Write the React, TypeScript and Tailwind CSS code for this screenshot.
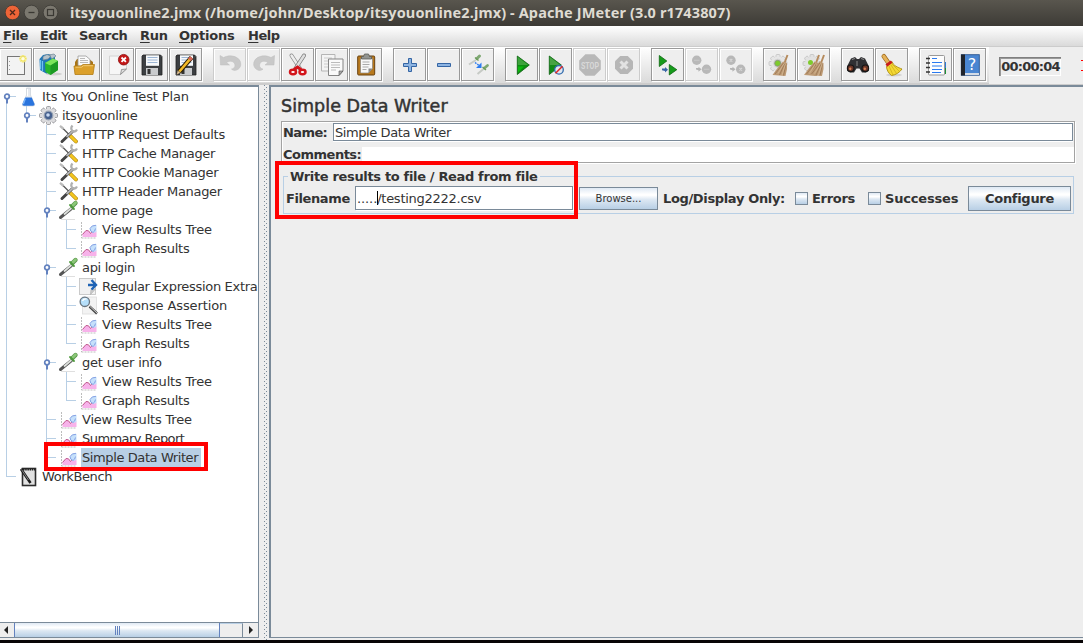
import React from "react";

type IconName =
  | "new" | "templates" | "open" | "close" | "save" | "saveAs" | "undo" | "redo"
  | "cut" | "copy" | "paste" | "plus" | "minus" | "toggle" | "play" | "playNow"
  | "stop" | "shutdown" | "remoteStart" | "remoteStop" | "remoteShutdown"
  | "clear" | "clearAll" | "search" | "resetSearch" | "list" | "help";

const GearPath = ({ cx, cy, r, fill, stroke }: { cx: number; cy: number; r: number; fill: string; stroke: string }) => (
  <g>
    {[0, 45, 90, 135].map((a) => (
      <rect key={a} x={cx - 2} y={cy - r} width={4} height={r * 2} rx={1} fill={fill} stroke={stroke} strokeWidth={0.8} transform={`rotate(${a} ${cx} ${cy})`} />
    ))}
    <circle cx={cx} cy={cy} r={r - 2} fill={fill} />
  </g>
);

const Floppy = () => (
  <g>
    <path d="M8 7h17.500l1.500 1.500V27H7V8z" fill="#3c3f42" stroke="#222" strokeWidth={0.8} />
    <rect x={11} y={7.300} width={13} height={10.500} fill="#f7f9fb" />
    <path d="M12.500 9.500h10M12.500 12h10M12.500 14.500h10" stroke="#9db6d4" strokeWidth={1} />
    <rect x={11} y={20} width={12} height={7} fill="#c9cbcd" />
    <rect x={12.500} y={21} width={3} height={5} fill="#333" />
  </g>
);

const Broom = ({ dx = 0 }: { dx?: number }) => (
  <g transform={`translate(${dx} 0)`}>
    <path d="M24.500 7L21.500 15" stroke="#b58a5c" strokeWidth={2} />
    <path d="M20 13.500l4 1.500 0 6-1.500 7-13-1 5-7z" fill="#bd9a74" />
    <path d="M20.500 15L12 26M21.500 16l-5 11M23 16l-2.500 11.500" stroke="#93704e" strokeWidth={0.7} />
    <path d="M21 15.500l-6 10M22.500 16l-3.500 11" stroke="#dcc2a0" strokeWidth={0.6} />
  </g>
);

const octagon = (cx: number, cy: number, r: number) => {
  const k = r * 0.42;
  return `${cx - k},${cy - r} ${cx + k},${cy - r} ${cx + r},${cy - k} ${cx + r},${cy + k} ${cx + k},${cy + r} ${cx - k},${cy + r} ${cx - r},${cy + k} ${cx - r},${cy - k}`;
};

const icons: Record<IconName, React.ReactNode> = {
  new: (
    <g>
      <rect x={8.500} y={8.500} width={17} height={18} fill="#f3f3f3" stroke="#767676" />
      <path d="M10.500 13v1M10.500 17v1M10.500 21v1" stroke="#999" />
      <circle cx={24} cy={10.700} r={3.800} fill="#f6ee9a" opacity={0.800} />
      <path d="M24 7v7.500M20.500 10.700h7M21.500 8.300l5 5M26.500 8.300l-5 5" stroke="#f2e45c" strokeWidth={1.200} />
      <circle cx={24} cy={10.700} r={1.800} fill="#fffde0" />
    </g>
  ),
  templates: (
    <g>
      <path d="M6.500 11L10 7l5-1 7 2v14l-8 4-7-4z" fill="#1f77b8" />
      <path d="M10 8.500l4-2 4 1.500-3 3-5 1zM16 7l5-1 2 2-4 3z" fill="#b7c3cc" stroke="#6f8796" strokeWidth={0.700} />
      <path d="M7.500 12v9.500M9.500 13v10" stroke="#6fc3ee" strokeWidth={1.200} />
      <ellipse cx={21} cy={26} rx={8} ry={1.500} fill="#cfcfcf" />
      <path d="M12 15l8-4.500 5 2.500V22l-7.500 5-5-3z" fill="#27b62c" />
      <path d="M12 15l8-4.500 5 2.500-7.500 4.500z" fill="#7be55c" />
      <path d="M17.500 17.500V27l7.500-5v-9z" fill="#1c9a24" />
    </g>
  ),
  open: (
    <g>
      <path d="M8 14l2-3h12l4 3v10H8z" fill="#a87416" />
      <path d="M11 18V8h8l4 3.500V18z" fill="#fafafa" stroke="#999" strokeWidth={0.800} />
      <path d="M13 10.500h5M13 12.500h8M13 14.500h8" stroke="#aaa" strokeWidth={0.800} />
      <path d="M7 18h7l2-1.500h11.500L26 26.500H8z" fill="#dba02b" stroke="#b27c14" strokeWidth={0.800} />
      <path d="M8.500 19.200h6l2-1.500h9.500" stroke="#f6d384" fill="none" strokeWidth={0.800} />
    </g>
  ),
  close: (
    <g>
      <path d="M8.500 8h17v13l-6 5.500h-11z" fill="#f6f6f6" stroke="#cfcfcf" strokeWidth={0.900} />
      <path d="M25.500 21l-6 5.500 1-5z" fill="#ddd" stroke="#777" strokeWidth={0.700} />
      <circle cx={22.700} cy={11.700} r={5.300} fill="#c41717" stroke="#8c1010" strokeWidth={0.800} />
      <path d="M20.500 9.500l4.400 4.400M24.900 9.500l-4.400 4.400" stroke="#fff" strokeWidth={1.800} />
    </g>
  ),
  save: <Floppy />,
  saveAs: (
    <g>
      <Floppy />
      <path d="M22.500 9.500L10 24" stroke="#2b1c00" strokeWidth={4.600} />
      <path d="M22.300 9.700L10 24" stroke="#f3ba27" strokeWidth={2.600} />
      <path d="M22.500 9.500l-2 2.300" stroke="#d9655a" strokeWidth={3.600} />
      <path d="M8.500 22.200l3 2.600-4 2.200z" fill="#e8c897" stroke="#333" strokeWidth={0.500} />
    </g>
  ),
  undo: <path d="M7 7.500l.5 9.500h9l-3-2.500c4-2.500 8-1 8.500 2.500 .2 2.500-2 4-3.500 4 2.500 3 8.500 1 9.300-4C28.500 9 18 5.500 10.500 9.500z" fill="#c9c9c9" stroke="#bcbcbc" strokeWidth={0.500} />,
  redo: <path transform="translate(34.500 0) scale(-1 1)" d="M7 7.500l.5 9.500h9l-3-2.500c4-2.500 8-1 8.500 2.500 .2 2.500-2 4-3.500 4 2.500 3 8.500 1 9.300-4C28.500 9 18 5.500 10.500 9.500z" fill="#c9c9c9" stroke="#bcbcbc" strokeWidth={0.500} />,
  cut: (
    <g>
      <path d="M10.500 7.500l8.500 13" stroke="#888" strokeWidth={4} strokeLinecap="round" />
      <path d="M10.500 7.500l8.500 13" stroke="#eee" strokeWidth={2.500} strokeLinecap="round" />
      <path d="M23 7.500l-8.500 13" stroke="#777" strokeWidth={4} strokeLinecap="round" />
      <path d="M23 7.500l-8.500 13" stroke="#dedede" strokeWidth={2.500} strokeLinecap="round" />
      <path d="M13 21.500l3.500-2.500 3.500 2.500" stroke="#d3141b" strokeWidth={3} fill="none" />
      <ellipse cx={12} cy={24} rx={3} ry={2.200} fill="#fff" stroke="#d3141b" strokeWidth={2.500} />
      <ellipse cx={21.500} cy={24} rx={3} ry={2.200} fill="#fff" stroke="#d3141b" strokeWidth={2.500} />
    </g>
  ),
  copy: (
    <g>
      <path d="M6.500 6.500h13.500v16.500h-13.500z" fill="#f4f4f4" stroke="#b5b5b5" />
      <path d="M9 10h8M9 13h8M9 16h8M9 19h5" stroke="#ccc" />
      <path d="M13.500 11h14.500v12l-4 4.500h-10.500z" fill="#fafafa" stroke="#858585" />
      <path d="M16 14.500h9M16 17h9M16 19.500h9M16 22h5" stroke="#bbb" />
      <path d="M28 23l-4 4.500V23z" fill="#aaa" stroke="#555" strokeWidth={0.600} />
    </g>
  ),
  paste: (
    <g>
      <rect x={8.700} y={8} width={17} height={19} rx={1} fill="#b8791d" stroke="#694210" />
      <path d="M11.500 10.500h12v10l-4 4.500h-8z" fill="#f8f8f8" stroke="#777" strokeWidth={0.600} />
      <path d="M13.500 14h7M13.500 16.500h7M13.500 19h6M13.500 21.500h4" stroke="#aaa" />
      <path d="M23.500 20.500l-4 4.500v-4.500z" fill="#888" />
      <path d="M12.500 11V8.500h2l1-2.500h4l1 2.500h2V11z" fill="#929490" stroke="#5b5d59" strokeWidth={0.800} />
    </g>
  ),
  plus: <path d="M15.500 10.500h3v5h5v3h-5v5h-3v-5h-5v-3h5z" fill="#8db4e2" stroke="#3465a4" />,
  minus: <path d="M10.500 15.500h13v3h-13z" fill="#8db4e2" stroke="#3465a4" />,
  toggle: (
    <g>
      <path d="M15 12L8 16.500" stroke="#c6cac5" strokeWidth={2} />
      <path d="M18.500 8l-2.500 2.500" stroke="#7fa873" strokeWidth={3} strokeLinecap="round" />
      <path d="M14 9.500l3.500 3" stroke="#6b9c5b" strokeWidth={1.400} />
      <path d="M22.500 21l-6 5" stroke="#c6cac5" strokeWidth={2} />
      <path d="M26.500 17.500l-3 2.500" stroke="#7fa873" strokeWidth={2.800} strokeLinecap="round" />
      <path d="M21.500 19l3.500 3" stroke="#6b9c5b" strokeWidth={1.400} />
      <path d="M14 14.500l4 3" stroke="#2c7df0" strokeWidth={1.400} strokeDasharray="1.800 1" />
      <path d="M20.500 14.500v5.500h-5.500z" fill="#2c7df0" />
    </g>
  ),
  play: (
    <g>
      <path d="M12.300 8v18.500L24.300 17z" fill="#0b8e12" stroke="#0a5e0d" strokeWidth={0.800} />
      <path d="M12.800 9l10.500 8h-10.500z" fill="#3ea33d" />
      <path d="M13 18.500h6l-6 6z" fill="#0cb90f" />
    </g>
  ),
  playNow: (
    <g>
      <path d="M10.300 8v18.500L22.300 17z" fill="#128a18" stroke="#0a5e0d" strokeWidth={0.800} />
      <path d="M10.800 9l10.500 8h-10.500z" fill="#47a344" />
      <circle cx={20} cy={21.800} r={4.300} fill="#dfe7f0" stroke="#316bad" strokeWidth={1.300} />
      <path d="M16.500 25.300l7-7" stroke="#e12a2a" strokeWidth={1.600} />
    </g>
  ),
  stop: (
    <g>
      <polygon points={octagon(17, 17, 10.8)} fill="#b8b8b8" />
      <text x={17} y={20.600} textAnchor="middle" textLength={18} lengthAdjust="spacingAndGlyphs" fontSize={9.500} fontWeight={700} fontFamily="Roboto, sans-serif" fill="#d8d8d8">STOP</text>
    </g>
  ),
  shutdown: (
    <g>
      <polygon points={octagon(17, 17, 9)} fill="#b6b6b6" />
      <path d="M13.500 13.500l7 7M20.500 13.500l-7 7" stroke="#e2e2e2" strokeWidth={3} />
    </g>
  ),
  remoteStart: (
    <g>
      <path d="M8.300 7.500v11l7.500-5.500z" fill="#169b1b" stroke="#0b640f" strokeWidth={0.800} />
      <path d="M18.300 16.500v10.500l7.500-5.300z" fill="#169b1b" stroke="#0b640f" strokeWidth={0.800} />
      <path d="M11 20.500h3v-1.500l3 2.800-3 2.800V23l-3-.8z" fill="#3a66a6" />
    </g>
  ),
  remoteStop: (
    <g>
      <circle cx={11.700} cy={12.300} r={4.700} fill="#b8b8b8" />
      <path d="M9 12.300h5.500" stroke="#c6c6c6" strokeWidth={1.200} />
      <circle cx={21.500} cy={21.300} r={4.700} fill="#b8b8b8" />
      <path d="M18.800 21.300h5.500" stroke="#c6c6c6" strokeWidth={1.200} />
      <path d="M11 20h2.500v-1.300l3 2.500-3 2.500V22.300l-2.500-.8z" fill="#b5b5b5" />
    </g>
  ),
  remoteShutdown: (
    <g>
      <circle cx={12} cy={12.300} r={4.700} fill="#b8b8b8" />
      <path d="M10.700 11l2.600 2.600M13.300 11l-2.600 2.600" stroke="#d8d8d8" strokeWidth={1.100} />
      <circle cx={21.700} cy={21.300} r={4.700} fill="#b8b8b8" />
      <path d="M20.400 20l2.600 2.600M23 20l-2.600 2.600" stroke="#d8d8d8" strokeWidth={1.100} />
      <path d="M11 20h2.500v-1.300l3 2.500-3 2.500V22.300l-2.500-.8z" fill="#b5b5b5" />
    </g>
  ),
  clear: (
    <g>
      <GearPath cx={15} cy={15.500} r={9} fill="#e6e6e6" stroke="#c2c2c2" />
      <circle cx={14.700} cy={15.300} r={4.500} fill="#d2d2d2" />
      <circle cx={14.700} cy={15.300} r={3} fill="#7ecb2c" stroke="#8a8f85" strokeWidth={0.800} />
      <Broom />
    </g>
  ),
  clearAll: (
    <g>
      <GearPath cx={15} cy={15.500} r={9} fill="#e2e2e2" stroke="#c0c0c0" />
      <circle cx={13.500} cy={14.500} r={2.500} fill="#7ecb2c" />
      <Broom dx={-2.500} />
      <Broom dx={2.500} />
    </g>
  ),
  search: (
    <g>
      <path d="M10 10.500l4-1.500 2 2h2l2-2 4 1.500 4 8v4l-3 2h-4l-2.500-4h-3L13 24.500H9l-3-2v-4z" fill="#303033" />
      <circle cx={9.700} cy={20.300} r={3.300} fill="#6b3527" stroke="#151515" strokeWidth={1.200} />
      <circle cx={24.300} cy={20.300} r={3.300} fill="#6b3527" stroke="#151515" strokeWidth={1.200} />
      <circle cx={9.200} cy={20.800} r={1.200} fill="#d58357" />
      <circle cx={23.800} cy={20.800} r={1.200} fill="#d58357" />
      <path d="M11 11.500l3-1M20 10.500l3 1M16 13v5" stroke="#8a8a8a" strokeWidth={1} />
    </g>
  ),
  resetSearch: (
    <g>
      <ellipse cx={19} cy={27} rx={8} ry={1.400} fill="#d2d2d2" />
      <path d="M8.800 8.300l4.200 6" stroke="#9c681c" strokeWidth={4.600} strokeLinecap="round" />
      <path d="M8.800 8.300l4.200 6" stroke="#e5b258" strokeWidth={3.200} strokeLinecap="round" />
      <path d="M17 13.500c1 4 6 6 10 7.500-2 3-6 6-10.500 6.500-3-2-5-6-5-9z" fill="#f3d833" stroke="#ab8d12" strokeWidth={0.900} />
      <path d="M14 18l4 9M16 17l5.500 8.500M17 16l7 7" stroke="#c9a71b" strokeWidth={0.700} />
      <path d="M11.300 17.500l5.400-3.800" stroke="#c91c1c" strokeWidth={2.800} />
    </g>
  ),
  list: (
    <g>
      <path d="M24 14h3v6h-3z" fill="#2f7bd6" />
      <path d="M24 20h3v6h-3z" fill="#1d8f33" />
      <rect x={9.500} y={7.500} width={16} height={19.500} rx={1} fill="#fdfdfd" stroke="#999" />
      <path d="M7 10.500h4M7 15h4M7 19.500h4M7 24h4" stroke="#333" strokeWidth={1.500} />
      <path d="M13 10.500h5M13 14.500h10M13 18h10M13 21.500h10M13 24.500h9" stroke="#2a7af0" strokeWidth={1.200} />
    </g>
  ),
  help: (
    <g>
      <rect x={8.300} y={6.700} width={18} height={20.500} fill="#4a86d2" stroke="#2b5590" strokeWidth={0.900} />
      <rect x={8} y={6.500} width={4} height={21} fill="#20242b" />
      <rect x={12} y={25} width={14} height={2} fill="#d3dbe6" />
      <text x={19} y={22} textAnchor="middle" fontSize={16} fontFamily="DejaVu Sans, sans-serif" fill="#fff">?</text>
    </g>
  ),
};

const groups: { name: IconName; off?: boolean }[][] = [
  [{ name: "new" }, { name: "templates" }, { name: "open" }, { name: "close" }, { name: "save" }, { name: "saveAs" }],
  [{ name: "undo", off: true }, { name: "redo", off: true }, { name: "cut" }, { name: "copy" }, { name: "paste" }],
  [{ name: "plus" }, { name: "minus" }, { name: "toggle" }],
  [{ name: "play" }, { name: "playNow" }, { name: "stop", off: true }, { name: "shutdown", off: true }],
  [{ name: "remoteStart" }, { name: "remoteStop", off: true }, { name: "remoteShutdown", off: true }],
  [{ name: "clear" }, { name: "clearAll" }],
  [{ name: "search" }, { name: "resetSearch" }],
  [{ name: "list" }, { name: "help" }],
];

const ToolButton = ({ name, off }: { name: IconName; off?: boolean }) => (
  <button className={`h-[33px] w-[33px] shrink-0 border bg-[#eeeeee] shadow-[1px_1px_0_#fff,inset_1px_1px_0_#fff] ${off ? "border-[#cccccc]" : "border-[#999999]"}`}>
    <svg width={31} height={31} viewBox="1 1 31 31" className="block">{icons[name]}</svg>
  </button>
);

type TreeIcon = "flask" | "gear" | "tools" | "dropper" | "chart" | "extract" | "lens" | "bench";

const treeIcons: Record<TreeIcon, React.ReactNode> = {
  flask: (
    <g>
      <path d="M6.500 1h4v7l4 9q.5 2-1.500 2H4q-2 0-1.500-2l4-9z" fill="#e4e9ef" stroke="#c3cad2" strokeWidth={0.600} />
      <path d="M5.300 10.500h6.400l2.800 6.500q.3 1.800-1.500 1.800H4q-1.800 0-1.500-1.800z" fill="#2a74dd" />
      <path d="M5.300 11.500l-2 5.500" stroke="#79b4fa" strokeWidth={1.500} />
      <path d="M7.500 2v7" stroke="#fff" />
    </g>
  ),
  gear: (
    <g>
      <GearPath cx={8.500} cy={9.500} r={9} fill="#dcdcde" stroke="#8b8b90" />
      <circle cx={8.500} cy={9.500} r={4.300} fill="#46618e" stroke="#95a0b2" strokeWidth={1.200} />
      <circle cx={8} cy={9} r={1.800} fill="#c8d9f2" />
    </g>
  ),
  tools: (
    <g>
      <path d="M1 1.500l8 8" stroke="#555" strokeWidth={1.200} />
      <path d="M0 .8l3.500 3" stroke="#bbb" strokeWidth={2.200} />
      <path d="M10.500 11l5.500 5.500" stroke="#a57a05" strokeWidth={3.800} strokeLinecap="round" />
      <path d="M10.500 11l5.500 5.500" stroke="#f3c520" strokeWidth={2.600} strokeLinecap="round" />
      <path d="M12.500 6.500L2 16.500" stroke="#444" strokeWidth={3} strokeLinecap="round" />
      <path d="M12.500 6.500l-6 5.500" stroke="#b5b5b5" strokeWidth={1.800} />
      <path d="M12.500 .5q-2.500 3 0 5.500 3 1.500 4.500-1.500" stroke="#b0b0b0" fill="none" strokeWidth={2.200} />
    </g>
  ),
  dropper: (
    <g>
      <path d="M11.500 7.500L3.500 14 .5 16.500" stroke="#555" strokeWidth={3} strokeLinecap="round" fill="none" />
      <path d="M11.500 7L4 13.500" stroke="#dfe2de" strokeWidth={1.700} />
      <path d="M15.500 2l-3 3" stroke="#5c964d" strokeWidth={4.400} strokeLinecap="round" />
      <path d="M15.500 1.800l-2.500 2.500" stroke="#8ac777" strokeWidth={2.800} strokeLinecap="round" />
      <path d="M10 4l4 4" stroke="#4d9a3c" strokeWidth={1.800} strokeLinecap="round" />
      <path d="M1 18.500h14" stroke="#d7d7d7" strokeWidth={0.800} />
    </g>
  ),
  chart: (
    <g>
      <path d="M1.500 2v16M1.500 18h15" stroke="#b5b5b5" strokeWidth={0.900} strokeDasharray="2 1" />
      <path d="M2.500 17v-3l3.500-3.500 2.500 .5 2 2.500 2.500-3 3.500 1V17z" fill="#f7b2ea" />
      <path d="M2.500 14.500l3.500-4 2.500 .3 2 2.700 3-3.500" stroke="#c05a8c" fill="none" strokeWidth={1} />
      <path d="M16.500 5q-5-.5-6.500 3.500 0 3.500 3 4.500l3.500-1z" fill="#c5e0fb" />
      <path d="M16 5.300q-4.500-.3-6 3.200 0 3 3 4 2-1 2.500-4" stroke="#86a2e4" fill="none" strokeWidth={1} />
    </g>
  ),
  extract: (
    <g>
      <rect x={-0.500} y={1.500} width={16} height={16} fill="#f1f1f1" stroke="#c5c5c5" strokeWidth={0.900} />
      <path d="M15.500 12l-5 5.500 .5-5z" fill="#ccc" stroke="#aaa" strokeWidth={0.600} />
      <path d="M8 8h8M11.500 3l4.500 5-4.500 4.500" stroke="#1f63b5" strokeWidth={2.400} fill="none" />
    </g>
  ),
  lens: (
    <g>
      <rect x={2.500} y={1} width={14} height={17} fill="#f3f3f3" stroke="#ddd" strokeWidth={0.800} />
      <path d="M9.500 10.500l7.500 7" stroke="#444" strokeWidth={2.400} />
      <path d="M10 10.500l7 6.500" stroke="#ccc" strokeWidth={1} />
      <circle cx={4.800} cy={5.800} r={4.700} fill="#b5dffa" stroke="#6a7680" strokeWidth={1.300} />
      <path d="M2.500 5q1-2.500 4-2" stroke="#fff" strokeWidth={1.300} fill="none" />
    </g>
  ),
  bench: (
    <g>
      <rect x={2.500} y={1.500} width={13} height={17} fill="#e1e1e1" stroke="#2c2c2c" strokeWidth={1.600} />
      <path d="M3 2.500h12" stroke="#222" strokeWidth={2} strokeDasharray="1.500 .7" />
      <path d="M1 2l9.500 14" stroke="#1c1c1c" strokeWidth={2.600} />
      <path d="M1.500 2.500l7 10.500" stroke="#9b9b9b" strokeWidth={0.800} />
    </g>
  ),
};

type Guide = "none" | "line" | "mid" | "end" | "start";
type Node = { label: string; icon: TreeIcon; guides: Guide[]; track: string; open?: boolean; selected?: boolean };

const leaf: Guide[] = ["line", "none", "mid"];
const deep: Guide[] = ["line", "none", "line", "mid"];
const deepEnd: Guide[] = ["line", "none", "line", "end"];

const nodes: Node[] = [
  { label: "Its You Online Test Plan", icon: "flask", guides: ["start"], track: "tracking-[-0.12px]", open: true },
  { label: "itsyouonline", icon: "gear", guides: ["line", "end"], track: "tracking-[-0.3px]", open: true },
  { label: "HTTP Request Defaults", icon: "tools", guides: leaf, track: "tracking-[-0.27px]" },
  { label: "HTTP Cache Manager", icon: "tools", guides: leaf, track: "tracking-[-0.33px]" },
  { label: "HTTP Cookie Manager", icon: "tools", guides: leaf, track: "tracking-[-0.34px]" },
  { label: "HTTP Header Manager", icon: "tools", guides: leaf, track: "tracking-[-0.32px]" },
  { label: "home page", icon: "dropper", guides: leaf, track: "tracking-[-0.3px]", open: true },
  { label: "View Results Tree", icon: "chart", guides: deep, track: "tracking-[-0.2px]" },
  { label: "Graph Results", icon: "chart", guides: deepEnd, track: "tracking-[-0.27px]" },
  { label: "api login", icon: "dropper", guides: leaf, track: "tracking-[-0.3px]", open: true },
  { label: "Regular Expression Extra", icon: "extract", guides: deep, track: "tracking-[-0.32px]" },
  { label: "Response Assertion", icon: "lens", guides: deep, track: "tracking-[-0.12px]" },
  { label: "View Results Tree", icon: "chart", guides: deep, track: "tracking-[-0.2px]" },
  { label: "Graph Results", icon: "chart", guides: deepEnd, track: "tracking-[-0.27px]" },
  { label: "get user info", icon: "dropper", guides: leaf, track: "tracking-[-0.2px]", open: true },
  { label: "View Results Tree", icon: "chart", guides: deep, track: "tracking-[-0.2px]" },
  { label: "Graph Results", icon: "chart", guides: deepEnd, track: "tracking-[-0.27px]" },
  { label: "View Results Tree", icon: "chart", guides: leaf, track: "tracking-[-0.2px]" },
  { label: "Summary Report", icon: "chart", guides: leaf, track: "tracking-[-0.55px]" },
  { label: "Simple Data Writer", icon: "chart", guides: ["line", "none", "end"], track: "tracking-[-0.4px]", selected: true },
  { label: "WorkBench", icon: "bench", guides: ["end"], track: "tracking-[-0.38px]" },
];

const guidePaths: Record<Guide, string> = {
  none: "",
  line: "M6.5 0v19",
  mid: "M6.5 0v19M6.500 9.500h9.500",
  end: "M6.5 0v10M6.500 9.500h9.500",
  start: "M6.5 9v10M6.500 9.500h9.500",
};

const TreeRow = ({ label, icon, guides, track, open, selected }: Node) => (
  <div className="flex h-[19px] whitespace-nowrap">
    {guides.map((g, i) => (
      <svg key={i} width={20} height={19} className="block shrink-0">
        <path d={guidePaths[g]} stroke="#b8cfe5" fill="none" />
        {open && i === guides.length - 1 && (
          <g>
            <path d="M7 12v4.500" stroke="#6382bf" strokeWidth={2} />
            <circle cx={7} cy={9.500} r={2.300} fill="#fff" stroke="#6382bf" strokeWidth={1.700} />
          </g>
        )}
      </svg>
    ))}
    <svg width={20} height={19} className="block shrink-0 overflow-visible">{treeIcons[icon]}</svg>
    <span className={`ml-px pl-px leading-[19px] ${track} ${selected ? "bg-[#b8cfe5] pr-[3px]" : ""}`}>{label}</span>
  </div>
);

const menus = [
  { key: "F", rest: "ile", w: "w-[37px] tracking-[-0.4px]" },
  { key: "E", rest: "dit", w: "w-[39px] tracking-[-0.5px]" },
  { key: "", rest: "Search", w: "w-[61px] tracking-[-0.3px]" },
  { key: "R", rest: "un", w: "w-[39px] tracking-[-0.3px]" },
  { key: "O", rest: "ptions", w: "w-[69px] tracking-[-0.2px]" },
  { key: "H", rest: "elp", w: "w-[40px] tracking-[-0.5px]" },
];

const metal = "bg-[linear-gradient(#dfe9f4,#ffffff_30%,#ffffff_35%,#dde8f3_55%,#b8cfe5)]";

const Check = () => <span className={`mt-[6px] h-[13px] w-[13px] shrink-0 border border-[#7a8a99] ${metal}`} />;

export default function App() {
  return (
    <div className="relative flex h-[643px] w-[1083px] flex-col overflow-hidden bg-[#eeeeee] font-['DejaVu_Sans',sans-serif] text-[13px] text-[#333333]">
      <header className="flex h-[26px] shrink-0 items-start bg-[linear-gradient(#59564e,#3d3b36)] pl-[5px]">
        <svg width={56} height={18} className="mt-[4px] block shrink-0">
          <circle cx={7.500} cy={8.500} r={7.300} fill="#ee6437" stroke="#35332f" strokeWidth={0.700} />
          <path d="M5 6l5 5M10 6l-5 5" stroke="#4e271a" strokeWidth={1.300} />
          <circle cx={26.500} cy={8.500} r={7.300} fill="#7b786f" stroke="#35332f" strokeWidth={0.700} />
          <path d="M23.500 8.500h6" stroke="#3a3833" strokeWidth={1.300} />
          <circle cx={45.500} cy={8.500} r={7.300} fill="#7b786f" stroke="#35332f" strokeWidth={0.700} />
          <rect x={42.500} y={5.500} width={6} height={6} fill="none" stroke="#3a3833" strokeWidth={1.200} />
        </svg>
        <h1 className="ml-[9px] whitespace-nowrap font-['Noto_Sans',sans-serif] text-[14.5px] leading-[24px] font-bold tracking-[0.12px] text-[#dfdbd2]">
          itsyouonline2.jmx (/home/john/Desktop/itsyouonline2.jmx) - Apache JMeter (3.0 r1743807)
        </h1>
      </header>

      <nav className="flex h-[21px] shrink-0 border-b border-[#cccccc] bg-[linear-gradient(#ffffff,#dadada)] pl-[3px] font-bold leading-[20px]">
        {menus.map((m) => (
          <span key={m.rest} className={`shrink-0 whitespace-nowrap ${m.w}`}>
            <span className="underline decoration-1 underline-offset-2">{m.key}</span>
            {m.rest}
          </span>
        ))}
      </nav>

      <div className="flex h-[38px] shrink-0 border-b border-[#cccccc]">
        <div className="flex h-[37px] w-[989px] shrink-0 gap-[11px] border-b border-[#cccccc] bg-[linear-gradient(#ffffff,#dadada)] pt-px">
          {groups.map((g, i) => (
            <div key={i} className={`flex gap-px ${i === 0 ? "-ml-px" : ""}`}>
              {g.map((b) => <ToolButton key={b.name} {...b} />)}
            </div>
          ))}
        </div>
        <div className="mt-[10px] ml-[10px] flex h-[19px] w-[62px] shrink-0 items-center justify-center border-t border-l border-[#7f7f7f] bg-[#eeeeee] font-bold tracking-[-0.75px] shadow-[inset_1px_1px_0_#999,inset_-1px_-1px_0_#fff]">
          00:00:04
        </div>
        <div className="mt-[13px] ml-[20px] h-[11px] w-[2px] border-y border-[#ff0000]" />
      </div>

      <main className="flex h-[555px] shrink-0">
        <section className="flex h-[553px] w-[259px] shrink-0 flex-col border-t-2 border-r border-[#7a8a99] bg-white">
          <div className="min-h-0 flex-1 overflow-hidden">
            {nodes.map((n, i) => <TreeRow key={i} {...n} />)}
          </div>
          <div className="flex h-[16px] shrink-0 border-y border-[#7a8a99] bg-[#eeeeee]">
            <div className="flex w-[14px] items-center justify-center">
              <svg width={14} height={14}><path d="M8 3v8L4 7z" fill="#222" /></svg>
            </div>
            <div className={`flex w-[206px] items-center justify-center gap-px border-x border-[#6382bf] ${metal}`}>
              <span className="h-[9px] w-px bg-[#6382bf]" />
              <span className="h-[9px] w-px bg-[#6382bf]" />
              <span className="h-[9px] w-px bg-[#6382bf]" />
            </div>
            <div className="w-[23px] border-t border-r border-[#b8cfe5] border-r-[#7a8a99]" />
            <div className="flex flex-1 items-center justify-center">
              <svg width={14} height={14}><path d="M5 3v8l4-4z" fill="#222" /></svg>
            </div>
          </div>
        </section>

        <div className="flex w-[10px] shrink-0 pl-[5px]">
          <div className="w-[4px] bg-[radial-gradient(circle_at_0.5px_0.5px,#7a8a99_0.6px,transparent_0.7px),radial-gradient(circle_at_2.5px_2.5px,#7a8a99_0.6px,transparent_0.7px)] bg-[size:4px_4px]" />
        </div>

        <section className="flex h-[553px] min-w-0 flex-1 flex-col border-t-2 border-b border-l-2 border-[#7a8a99] pl-[10px]">
          <h2 className="mt-[9px] h-[25px] whitespace-nowrap text-[17.5px] leading-[20px] tracking-[0.03px] [-webkit-text-stroke:0.5px_#333333]">Simple Data Writer</h2>

          <div className="h-[42px] w-[794px] border border-[#a3a3a3] pl-px shadow-[1px_1px_0_#fff,inset_1px_1px_0_#fff]">
            <div className="flex h-[25px] pt-px">
              <label className="w-[50px] shrink-0 font-bold leading-[19px] tracking-[-0.6px]">Name:</label>
              <div className="h-[18px] w-[740px] border border-[#7a8a99] bg-white pl-px leading-[17px] tracking-[-0.42px] shadow-[0_1px_0_#fff]">Simple Data Writer</div>
            </div>
            <div className="flex h-[15px]">
              <label className="w-[79px] shrink-0 font-bold leading-[15px] tracking-[-0.5px]">Comments:</label>
              <div className="flex-1 bg-white" />
            </div>
          </div>

          <fieldset className="relative mt-[13px] ml-[2px] flex h-[38px] w-[791px] items-start border border-[#b8cfe5] pt-[9px] pl-[2px] leading-[25px] font-bold">
            <div className="absolute -top-[9px] left-[4px] bg-[#eeeeee] px-[2px] leading-[17px] tracking-[-0.34px] whitespace-nowrap">Write results to file / Read from file</div>
            <label className="w-[69px] shrink-0 tracking-[-0.4px]">Filename</label>
            <div className="flex h-[24px] w-[218px] shrink-0 items-center border border-[#7a8a99] bg-white pl-px font-normal tracking-[-0.26px] shadow-[1px_1px_0_#fff]">
              <span className="tracking-[-0.1px]">.....</span><span className="-mr-px h-[14px] w-px bg-black" />/testing2222.csv
            </div>
            <button className={`mt-px ml-[6px] h-[23px] w-[79px] shrink-0 border border-[#7a8a99] text-[10px] leading-[21px] font-normal ${metal}`}>Browse...</button>
            <span className="ml-[5px] w-[132px] shrink-0 tracking-[-0.35px] whitespace-nowrap">Log/Display Only:</span>
            <Check />
            <span className="ml-[4px] w-[56px] shrink-0 tracking-[-0.3px]">Errors</span>
            <Check />
            <span className="ml-[4px] w-[83px] shrink-0 tracking-[-0.18px]">Successes</span>
            <button className={`h-[25px] w-[103px] shrink-0 border border-[#7a8a99] leading-[23px] font-bold tracking-[-0.3px] ${metal}`}>Configure</button>
          </fieldset>
        </section>
      </main>

      <footer className="h-[3px] shrink-0 bg-[#080506]" />

      <div className="absolute top-[442px] left-[44px] h-[29px] w-[164px] border-4 border-[#ff0000]" />
      <div className="absolute top-[161px] left-[275px] h-[58px] w-[303px] border-4 border-[#ff0000]" />
    </div>
  );
}
